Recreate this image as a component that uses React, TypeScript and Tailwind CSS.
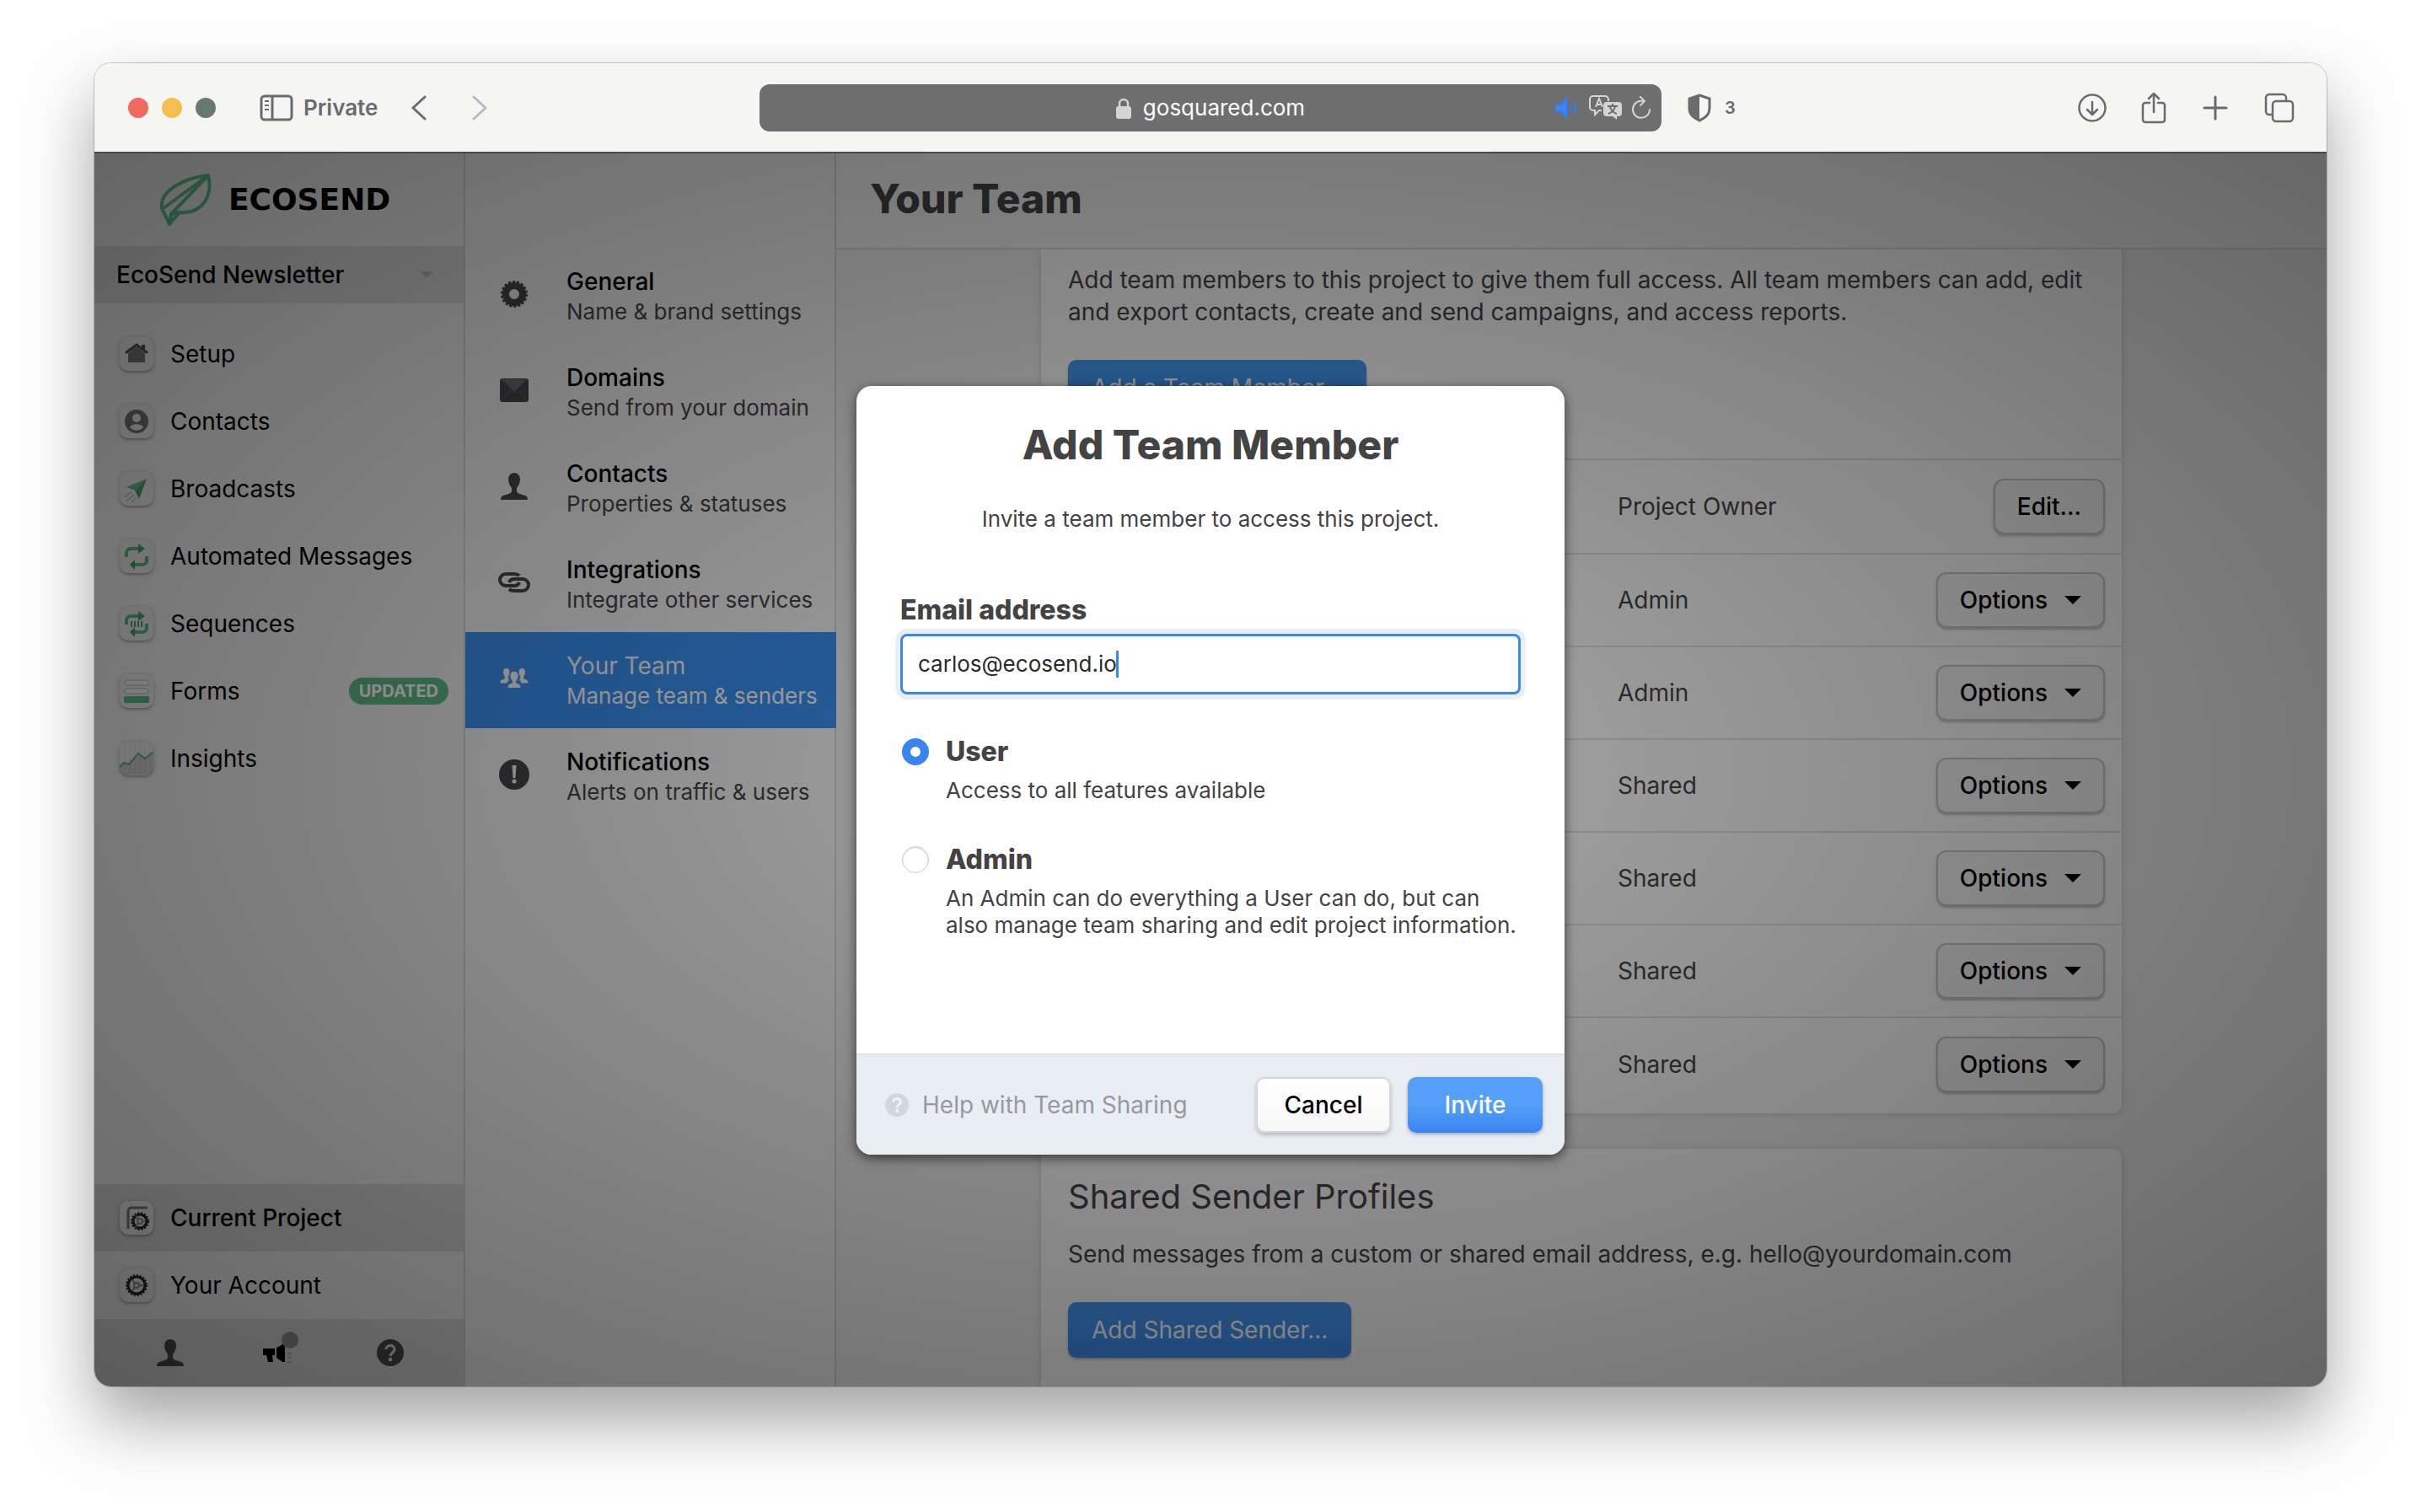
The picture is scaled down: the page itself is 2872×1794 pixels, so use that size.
import { useState } from "react";
import type { ReactNode } from "react";

const navItems: { label: string; icon: ReactNode; badge?: string }[] = [
    {
        label: "Setup",
        icon: (
            <>
                <path d="M10 19 20 11l10 8v10a1 1 0 0 1-1 1H11a1 1 0 0 1-1-1z" fill="#757575" />
                <path d="M8 18 20 9l12 9" stroke="#4b4d50" strokeWidth="3" strokeLinecap="round" />
                <path d="M26 9h4v6l-4-3z" fill="#4b4d50" />
            </>
        ),
    },
    {
        label: "Contacts",
        icon: (
            <>
                <circle cx="20" cy="20" r="14" fill="#707070" />
                <circle cx="20" cy="16" r="5" fill="#e8e8e8" />
                <path d="M12 27c2-5 14-5 16 0-4 5-12 5-16 0z" fill="#e8e8e8" />
            </>
        ),
    },
    {
        label: "Broadcasts",
        icon: (
            <>
                <path d="M6 30l7-6M8 35l9-8M14 36l5-5" stroke="#c4c4c4" strokeWidth="2" />
                <path d="M32 8 8 18l10 4z" fill="#5fbc86" />
                <path d="M32 8 18 22l5 10z" fill="#4c9c6d" />
            </>
        ),
    },
    {
        label: "Automated Messages",
        icon: (
            <>
                <path d="M8 21v-5a5 5 0 0 1 5-5h11M32 20v5a5 5 0 0 1-5 5H16" stroke="#5bb883" strokeWidth="4" />
                <path d="M22 5l8 6-8 6zM18 24l-6 6 6 6z" fill="#4f9d70" />
            </>
        ),
    },
    {
        label: "Sequences",
        icon: (
            <>
                <path d="M8 21v-5a5 5 0 0 1 5-5h11M32 20v5a5 5 0 0 1-5 5H16" stroke="#5bb883" strokeWidth="4" />
                <path d="M22 5l8 6-8 6zM18 24l-6 6 6 6z" fill="#4f9d70" />
                <path d="M14 17v7M18 17v7M22 17v7M26 17v7" stroke="#4f9d70" strokeWidth="2" />
            </>
        ),
    },
    {
        label: "Forms",
        badge: "UPDATED",
        icon: (
            <>
                <rect x="6" y="7" width="28" height="6" rx="2" fill="#f5f5f5" stroke="#b5b5b5" />
                <rect x="6" y="17" width="28" height="6" rx="2" fill="#f5f5f5" stroke="#b5b5b5" />
                <rect x="5" y="26" width="30" height="8" rx="1" fill="#5cbb84" />
            </>
        ),
    },
    {
        label: "Insights",
        icon: (
            <>
                <path d="M6 1v38M12 1v38M18 1v38M24 1v38M30 1v38M36 1v38" stroke="#d8d8d8" />
                <path d="M0 30l5-5 6 2 11-13 8 6 10-8v20a7 7 0 0 1-7 7H7a7 7 0 0 1-7-7z" fill="#000" fillOpacity=".12" />
                <path d="M0 30l5-5 6 2 11-13 8 6 10-8" stroke="#56b47e" strokeWidth="2" />
            </>
        ),
    },
];

const settings = [
    { title: "General", text: "Name & brand settings", icon: <GearSolid /> },
    { title: "Domains", text: "Send from your domain", icon: <Envelope /> },
    { title: "Contacts", text: "Properties & statuses", icon: <Person /> },
    { title: "Integrations", text: "Integrate other services", icon: <Chain /> },
    { title: "Your Team", text: "Manage team & senders", icon: <People />, active: true },
    { title: "Notifications", text: "Alerts on traffic & users", icon: <Alert /> },
];

const roles = ["Project Owner", "Admin", "Admin", "Shared", "Shared", "Shared", "Shared"];

function GearSolid() {
    return (
        <svg viewBox="0 0 32 32" className="size-8" fill="none">
            <circle cx="16" cy="16" r="10" stroke="currentColor" strokeWidth="8" />
            <circle cx="16" cy="16" r="14" stroke="currentColor" strokeWidth="4" strokeDasharray="3 1.890" />
        </svg>
    );
}

function Envelope() {
    return (
        <svg viewBox="0 0 34 28" className="h-7 w-9" fill="none">
            <rect width="34" height="28" rx="3" fill="currentColor" />
            <path d="M2 1l15 15L32 1z" fill="#676c74" />
            <path d="M1 27l11-12M33 27L22 15" stroke="#606368" />
        </svg>
    );
}

function Person() {
    return (
        <svg viewBox="0 0 32 32" className="size-8" fill="currentColor">
            <path d="M9 8c0-5 3-8 7-8s7 3 7 8c0 4-2 7-4 10v3c0 3 3 4 7 5 4 1 6 2 6 6H0c0-4 2-5 6-6 4-1 7-2 7-5v-3c-2-3-4-6-4-10z" />
        </svg>
    );
}

function Chain() {
    return (
        <svg viewBox="0 0 40 24" className="h-6 w-10" fill="none" stroke="currentColor" strokeWidth="4">
            <path d="M26 4c-2-2-4-2-6-2H10a7 7 0 0 0 0 14h10c3 0 5-1 6-4" />
            <path d="M14 20c2 2 4 2 6 2h10a7 7 0 0 0 0-14H20c-3 0-5 1-6 4" />
        </svg>
    );
}

function People() {
    return (
        <svg viewBox="0 0 36 26" className="h-6 w-9" fill="currentColor">
            <path d="M8 0c3 0 4 2 4 5s-1 4-2 6c0 2 1 3 2 4-2 1-3 2-3 4H0c0-3 1-4 4-5 1 0 2-1 2-3-1-2-2-3-2-6s1-5 4-5z" />
            <path d="M28 0c-3 0-4 2-4 5s1 4 2 6c0 2-1 3-2 4 2 1 3 2 3 4h9c0-3-1-4-4-5-1 0-2-1-2-3 1-2 2-3 2-6s-1-5-4-5z" />
            <path d="M18 4c3 0 5 2 5 6 0 3-2 5-3 7 0 2 1 2 3 3 2 0 3 2 3 5H10c0-3 1-5 3-5 2-1 3-1 3-3-1-2-3-4-3-7 0-4 2-6 5-6z" />
        </svg>
    );
}

function Alert() {
    return (
        <svg viewBox="0 0 36 36" className="size-9">
            <circle cx="18" cy="18" r="18" fill="currentColor" />
            <path d="M15.500 7h5l-1 15h-3z" fill="#f5f5f5" />
            <circle cx="18" cy="26" r="2.500" fill="#f5f5f5" />
        </svg>
    );
}

function Question({ className, mark }: { className: string; mark: string }) {
    return (
        <svg viewBox="0 0 32 32" className={className} fill="none">
            <circle cx="16" cy="16" r="16" fill="currentColor" />
            <path d="M11 12c0-6 10-6 10 0 0 4-5 4-5 8" stroke={mark} strokeWidth="3" />
            <rect x="14" y="22" width="4" height="4" fill={mark} />
        </svg>
    );
}

function Tile({ children }: { children: ReactNode }) {
    return (
        <span className="flex size-10 rounded-[10px] bg-[#ebebeb] shadow-[0_1px_4px_2px_rgba(0,0,0,0.1),0_2px_2px_rgba(0,0,0,0.18)]">
            <svg viewBox="0 0 40 40" className="size-10" fill="none">
                {children}
            </svg>
        </span>
    );
}

function CogLine({ cx, cy, r }: { cx: number; cy: number; r: number }) {
    return (
        <>
            <circle cx={cx} cy={cy} r={r} fill="#e6e6e6" stroke="#222326" strokeWidth="3" />
            <circle cx={cx} cy={cy} r={r + 2} stroke="#222326" strokeWidth="2" strokeDasharray="2 2" />
            <circle cx={cx} cy={cy} r="3" stroke="#888" strokeWidth="2" />
            <path d={`M${cx + 3} ${cy}h${r - 4}M${cx - 2} ${cy - 2}l-3-5M${cx - 2} ${cy + 2}l-3 5`} stroke="#888" strokeWidth="2" />
        </>
    );
}

function BrowserBar() {
    return (
        <header className="flex h-[107px] shrink-0 items-center justify-between border-b-2 border-[#4a4a4a] bg-[#f5f5f4] pr-[38px] pl-10 text-[#6b6b6b]">
            <div className="flex w-[748px] items-center">
                <div className="flex gap-4">
                    <span className="size-6 rounded-full bg-[#ed6a5e]" />
                    <span className="size-6 rounded-full bg-[#f4bf4f]" />
                    <span className="size-6 rounded-full bg-[#68796f]" />
                </div>
                <svg viewBox="0 0 40 32" className="ml-[52px] h-8 w-10" fill="none" stroke="currentColor" strokeWidth="3">
                    <rect x="2" y="2" width="36" height="28" rx="4" />
                    <path d="M15 2v28" />
                    <path d="M6 8h5M6 13h5M6 18h5" strokeWidth="2" />
                </svg>
                <span className="ml-3 text-[26px] font-semibold">Private</span>
                <button aria-label="Back" className="ml-10">
                    <svg viewBox="0 0 18 30" className="h-[30px] w-[18px]" fill="none" stroke="currentColor" strokeWidth="3" strokeLinecap="round" strokeLinejoin="round">
                        <path d="M16 2 2 15l14 13" />
                    </svg>
                </button>
                <button aria-label="Forward" className="ml-[54px] text-[#b9b9bb]">
                    <svg viewBox="0 0 18 30" className="h-[30px] w-[18px]" fill="none" stroke="currentColor" strokeWidth="3" strokeLinecap="round" strokeLinejoin="round">
                        <path d="m2 2 14 13L2 28" />
                    </svg>
                </button>
            </div>
            <div className="relative flex h-14 max-w-[1070px] flex-1 items-center justify-center gap-3.5 rounded-xl bg-[#6e6e6e] text-white">
                <svg viewBox="0 0 18 26" className="h-[26px] w-[18px]" fill="#d2d4d6">
                    <path d="M4 12V8a5 5 0 0 1 10 0v4" fill="none" stroke="#d2d4d6" strokeWidth="2.500" />
                    <rect y="11" width="18" height="15" rx="3" />
                </svg>
                <span className="text-[26px]">gosquared.com</span>
                <div className="absolute right-3 flex items-center gap-2.5 text-[#d2d4d6]">
                    <svg viewBox="0 0 30 24" className="h-6 w-[30px]" fill="none" stroke="#2f7ff0" strokeWidth="2">
                        <path d="M1 8h5l8-7v22l-8-7H1z" fill="#3b86f3" />
                        <path d="M18 8q3 4 0 8M22 5q5 7 0 14" />
                    </svg>
                    <svg viewBox="0 0 40 30" className="h-[30px] w-10" fill="none" stroke="currentColor" strokeWidth="2">
                        <path d="M15 18h-3l-5 5v-5H5a4 4 0 0 1-4-4V5a4 4 0 0 1 4-4h14a4 4 0 0 1 4 4v2" />
                        <path d="m8 14 4-10 4 10M9 11h6" />
                        <path d="M21 8h14a4 4 0 0 1 4 4v9a4 4 0 0 1-4 4h-2v4l-5-4h-7a4 4 0 0 1-4-4v-9a4 4 0 0 1 4-4z" fill="currentColor" stroke="none" />
                        <path d="M28 10v3M22 13h12M31 14q-2 6-8 8M25 14q2 6 8 8" stroke="#6e6e6e" />
                    </svg>
                    <svg viewBox="0 0 24 28" className="h-7 w-6" fill="none" stroke="currentColor" strokeWidth="2" strokeLinecap="round">
                        <path d="M14 6a10 10 0 1 0 8 10" />
                        <path d="m11 1 5 5-5 5" />
                    </svg>
                </div>
            </div>
            <div className="flex w-[750px] items-center pl-[30px]">
                <svg viewBox="0 0 28 34" className="h-[34px] w-7">
                    <path d="M14 2 26 6v12c0 6-5 11-12 14C7 29 2 24 2 18V6z" fill="none" stroke="currentColor" strokeWidth="3" />
                    <path d="M14 2v30C7 29 2 24 2 18V6z" fill="currentColor" />
                </svg>
                <span className="ml-4 text-xl font-semibold">3</span>
                <div className="ml-auto flex items-center gap-[41px]">
                    <button aria-label="Downloads">
                        <svg viewBox="0 0 34 34" className="size-[34px]" fill="none" stroke="currentColor" strokeWidth="2.500" strokeLinecap="round" strokeLinejoin="round">
                            <circle cx="17" cy="17" r="15.500" />
                            <path d="M17 10v14m-6-5 6 6 6-6" />
                        </svg>
                    </button>
                    <button aria-label="Share">
                        <svg viewBox="0 0 30 38" className="h-[38px] w-[30px]" fill="none" stroke="currentColor" strokeWidth="2.500" strokeLinecap="round" strokeLinejoin="round">
                            <path d="M10 13H5a3 3 0 0 0-3 3v17a3 3 0 0 0 3 3h20a3 3 0 0 0 3-3V16a3 3 0 0 0-3-3h-5" />
                            <path d="M15 24V2M9 8l6-6 6 6" />
                        </svg>
                    </button>
                    <button aria-label="New tab">
                        <svg viewBox="0 0 34 34" className="size-[34px]" fill="none" stroke="currentColor" strokeWidth="3" strokeLinecap="round">
                            <path d="M17 4v26M4 17h26" />
                        </svg>
                    </button>
                    <button aria-label="Tab overview">
                        <svg viewBox="0 0 36 36" className="size-9" fill="none" stroke="currentColor" strokeWidth="2.500">
                            <rect x="10" y="10" width="24" height="24" rx="4" />
                            <path d="M10 26H6a4 4 0 0 1-4-4V6a4 4 0 0 1 4-4h16a4 4 0 0 1 4 4v4" />
                        </svg>
                    </button>
                </div>
            </div>
        </header>
    );
}

function Sidebar() {
    return (
        <aside className="flex w-[440px] shrink-0 flex-col border-r-2 border-[#d5d5d5] bg-[#f0f0f0] text-[28px] text-black">
            <div className="flex h-[110px] items-center gap-5 pl-[77px]">
                <svg viewBox="0 0 62 62" className="size-[62px]" fill="none" stroke="#5dc189" strokeWidth="4" strokeLinejoin="round">
                    <path d="M58 2C30 5 0 20 3 41l9 19 12-14" />
                    <path d="M58 2c6 26-8 46-34 44l-10 2z" />
                    <path d="M58 2 5 41M14 48l-2 12" />
                </svg>
                <span className="font-['DejaVu_Sans',sans-serif] text-4xl font-bold">ECOSEND</span>
            </div>
            <button className="flex h-[68px] items-center justify-between bg-[#dadada] pr-9 pl-[26px] font-medium">
                EcoSend Newsletter
                <svg viewBox="0 0 16 8" className="h-2 w-4" fill="#b8b8b8">
                    <path d="M0 0h16L8 8z" />
                </svg>
            </button>
            <nav className="mt-5">
                {navItems.map((item) => (
                    <a key={item.label} href="#" className="flex h-20 items-center gap-5 pr-[18px] pl-[30px]">
                        <Tile>{item.icon}</Tile>
                        {item.label}
                        {item.badge && (
                            <span className="ml-auto rounded-full bg-[#5fba84] px-3 text-xl leading-8 font-bold text-white">
                                {item.badge}
                            </span>
                        )}
                    </a>
                ))}
            </nav>
            <div className="mt-auto">
                <a href="#" className="flex h-20 items-center gap-5 bg-[#d8d8d8] pl-[30px] font-medium">
                    <Tile>
                        <path d="M10 33V12a4 4 0 0 1 4-4h19" stroke="#777" strokeWidth="3" />
                        <CogLine cx={24} cy={24} r={8} />
                    </Tile>
                    Current Project
                </a>
                <a href="#" className="flex h-20 items-center gap-5 pl-[30px]">
                    <Tile>
                        <CogLine cx={20} cy={20} r={10} />
                    </Tile>
                    Your Account
                </a>
                <div className="flex h-20 items-center justify-between bg-[#dadada] pr-[71px] pl-[74px] text-[#484a4d]">
                    <button aria-label="Profile">
                        <Person />
                    </button>
                    <button aria-label="News" className="relative">
                        <svg viewBox="0 0 42 34" className="h-[34px] w-[42px] text-black" fill="currentColor">
                            <path d="M0 12h14v8h-3l1 8H6l-2-8H0zM16 11l4-2 6-4v23h-3l-7-5z" />
                            <path d="M29 18h5M29 23h4M29 28h4" stroke="#aaa" strokeWidth="2" />
                        </svg>
                        <span className="absolute -top-2 right-0 size-5 rounded-full bg-[#909090]" />
                    </button>
                    <button aria-label="Help">
                        <Question className="size-8" mark="#dadada" />
                    </button>
                </div>
            </div>
        </aside>
    );
}

function SettingsNav() {
    return (
        <nav className="w-[440px] shrink-0 border-r-2 border-[#d5d5d5] bg-[#f4f4f5] pt-28">
            {settings.map((item) => (
                <a
                    key={item.title}
                    href="#"
                    className={
                        item.active
                            ? "-mr-0.5 flex h-[114px] items-center bg-[#3b91f2] text-[#fafafa]"
                            : "flex h-[114px] items-center text-[#45474a]"
                    }
                >
                    <span className="flex w-[120px] shrink-0 justify-center pr-1 pb-1">{item.icon}</span>
                    <span className="flex flex-col pt-0.5 text-[26px] leading-9 whitespace-nowrap">
                        <span className={item.active ? "text-[28px]" : "text-[28px] font-medium text-black"}>
                            {item.title}
                        </span>
                        <span>{item.text}</span>
                    </span>
                </a>
            ))}
        </nav>
    );
}

function BlueButton({ children }: { children: ReactNode }) {
    return (
        <button className="h-[66px] rounded-[10px] bg-linear-to-b from-[#459af5] to-[#3d8ef0] px-7 text-[28px] text-white shadow-[0_2px_3px_rgba(0,0,0,0.25)]">
            {children}
        </button>
    );
}

function GreyButton({ children }: { children: ReactNode }) {
    return (
        <button className="inline-flex h-[66px] items-center gap-5 rounded-xl border-2 border-[#c6c6c8] bg-[#f3f3f4] px-[26px] text-[28px] font-medium text-black shadow-[0_2px_3px_rgba(0,0,0,0.25)]">
            {children}
        </button>
    );
}

function TeamPage() {
    return (
        <main className="flex min-w-0 flex-1 flex-col bg-[#f0f0f2] text-[#434547]">
            <div className="flex h-[114px] shrink-0 items-center border-b-2 border-[#d8d8da] bg-[#f5f5f6] pb-1 pl-10">
                <h1 className="text-5xl font-extrabold">Your Team</h1>
            </div>
            <div className="flex min-h-0 flex-1 flex-col items-center overflow-hidden text-[28px]">
                <section className="w-full max-w-[1282px] shrink-0 rounded-b-xl bg-[#fcfcfc] pt-[17px] pb-1 shadow-[0_1px_10px_rgba(0,0,0,0.15)]">
                    <div className="px-8 pb-[51px]">
                        <p className="leading-[38px]">
                            Add team members to this project to give them full access. All team members can add, edit
                            and export contacts, create and send campaigns, and access reports.
                        </p>
                        <div className="mt-[38px]">
                            <BlueButton>Add a Team Member...</BlueButton>
                        </div>
                    </div>
                    <table className="w-full">
                        <tbody>
                            {roles.map((role, index) => (
                                <tr key={index} className="h-[110px] border-t-2 border-[#e0e0e2] first:h-28">
                                    <td className="w-[684px]" />
                                    <td>{role}</td>
                                    <td className="pr-5 text-right">
                                        <GreyButton>
                                            {index === 0 ? (
                                                "Edit..."
                                            ) : (
                                                <>
                                                    Options
                                                    <svg viewBox="0 0 20 10" className="h-2.5 w-5" fill="currentColor">
                                                        <path d="M0 0h20L10 10z" />
                                                    </svg>
                                                </>
                                            )}
                                        </GreyButton>
                                    </td>
                                </tr>
                            ))}
                        </tbody>
                    </table>
                </section>
                <section className="mt-[42px] h-96 w-full max-w-[1282px] shrink-0 rounded-t-xl bg-[#fcfcfc] px-8 pt-8 shadow-[0_1px_10px_rgba(0,0,0,0.15)]">
                    <h2 className="text-[40px] leading-[50px]">Shared Sender Profiles</h2>
                    <p className="mt-6 leading-[38px]">
                        Send messages from a custom or shared email address, e.g. hello@yourdomain.com
                    </p>
                    <div className="mt-[38px]">
                        <BlueButton>Add Shared Sender...</BlueButton>
                    </div>
                </section>
            </div>
        </main>
    );
}

function InviteModal() {
    const [email, setEmail] = useState("carlos@ecosend.io");
    const [role, setRole] = useState("user");
    const radio =
        "ml-0.5 size-8 shrink-0 appearance-none rounded-full border border-[#d0d0d2] bg-white shadow-[inset_0_1px_2px_rgba(0,0,0,0.2)] checked:border-[10px] checked:border-[#3a84f2] checked:shadow-none";

    return (
        <form
            role="dialog"
            aria-labelledby="invite-title"
            className="flex w-[840px] flex-col overflow-hidden rounded-[18px] bg-white text-[26px] text-[#434343] shadow-[0_4px_14px_rgba(0,0,0,0.6)]"
            onSubmit={(event) => event.preventDefault()}
        >
            <div className="flex flex-col px-[52px] pt-10 pb-[136px]">
                <h2 id="invite-title" className="text-center text-5xl leading-[60px] font-extrabold">
                    Add Team Member
                </h2>
                <p className="mt-10 text-center leading-9">Invite a team member to access this project.</p>
                <label htmlFor="email" className="mt-[70px] text-[32px] leading-10 font-extrabold">
                    Email address
                </label>
                <div className="relative mt-2">
                    <input
                        id="email"
                        type="text"
                        value={email}
                        onChange={(event) => setEmail(event.target.value)}
                        className="h-[72px] w-full rounded-lg border-[3px] border-[#3b86f0] px-[18px] text-[#2a2a2a] ring-[6px] ring-[#e9eff6] outline-none"
                    />
                    <span className="absolute top-5 left-64 h-8 w-[3px] bg-[#3b86f0]" />
                </div>
                <label className="mt-12 grid grid-cols-[54px_1fr] items-center">
                    <input type="radio" name="role" checked={role === "user"} onChange={() => setRole("user")} className={radio} />
                    <span className="text-[32px] leading-10 font-extrabold">User</span>
                    <span className="col-start-2 mt-2.5 leading-8">Access to all features available</span>
                </label>
                <label className="mt-[46px] grid grid-cols-[54px_1fr] items-center">
                    <input type="radio" name="role" checked={role === "admin"} onChange={() => setRole("admin")} className={radio} />
                    <span className="text-[32px] leading-10 font-extrabold">Admin</span>
                    <span className="col-start-2 mt-2.5 leading-8">
                        An Admin can do everything a User can do, but can also manage team sharing and edit project
                        information.
                    </span>
                </label>
            </div>
            <div className="flex h-[120px] items-center border-t-2 border-[#e1e5ea] bg-[#e9eef5] pr-[26px] pl-[34px] text-[28px] font-medium">
                <a href="#" className="flex items-center gap-4 font-normal text-[#97999c]">
                    <Question className="size-7 text-[#d3d7dc]" mark="#f2f4f7" />
                    Help with Team Sharing
                </a>
                <button
                    type="button"
                    className="ml-auto h-[66px] w-40 rounded-[10px] border-2 border-[#d3d6da] bg-linear-to-b from-white to-[#f7f7f7] text-black shadow-[0_3px_5px_rgba(0,0,0,0.22)]"
                >
                    Cancel
                </button>
                <button
                    type="submit"
                    className="ml-5 h-[66px] w-40 rounded-[10px] bg-linear-to-b from-[#559ff8] from-50% to-[#3a84f2] text-white shadow-[0_2px_4px_rgba(0,0,0,0.3)]"
                >
                    Invite
                </button>
            </div>
        </form>
    );
}

export default function App() {
    return (
        <div className="flex h-screen flex-col bg-[#fefefe] px-28 pt-[75px] pb-[149px] font-['Inter',sans-serif]">
            <div className="flex min-h-0 flex-1 flex-col overflow-hidden rounded-[20px] shadow-[0_0_0_1px_rgba(0,0,0,0.2),0_40px_80px_rgba(0,0,0,0.36)]">
                <BrowserBar />
                <div className="relative flex min-h-0 flex-1 overflow-hidden">
                    <Sidebar />
                    <SettingsNav />
                    <TeamPage />
                    <div className="absolute inset-0 flex items-center justify-center bg-radial from-black/32 to-black/58">
                        <InviteModal />
                    </div>
                </div>
            </div>
        </div>
    );
}
